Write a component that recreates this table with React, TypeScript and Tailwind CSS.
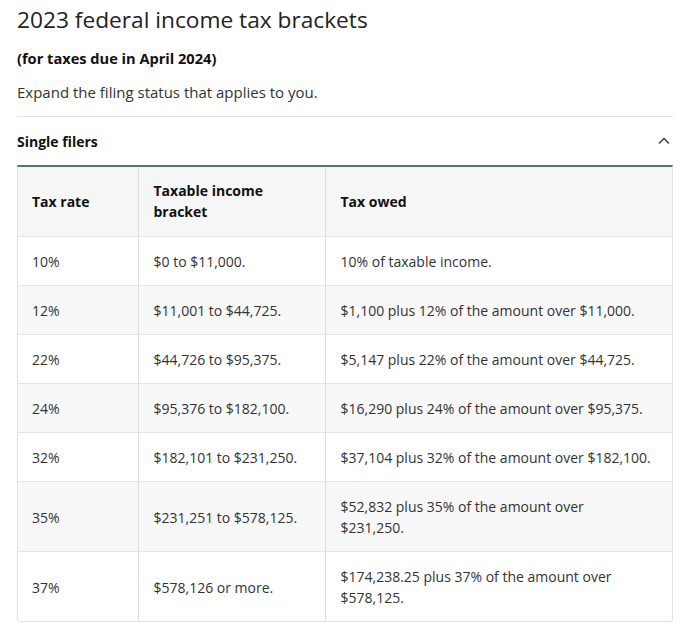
import type { ReactNode } from "react";

const rows: [string, string, ReactNode][] = [
  ["10%", "$0 to $11,000.", "10% of taxable income."],
  ["12%", "$11,001 to $44,725.", "$1,100 plus 12% of the amount over $11,000."],
  ["22%", "$44,726 to $95,375.", "$5,147 plus 22% of the amount over $44,725."],
  ["24%", "$95,376 to $182,100.", "$16,290 plus 24% of the amount over $95,375."],
  ["32%", "$182,101 to $231,250.", "$37,104 plus 32% of the amount over $182,100."],
  [
    "35%",
    "$231,251 to $578,125.",
    <>
      $52,832 plus 35% of the amount over
      <br />
      $231,250.
    </>,
  ],
  ["37%", "$578,126 or more.", "$174,238.25 plus 37% of the amount over $578,125."],
];

export default function App() {
  return (
    <div className="min-h-screen bg-white px-[17px] pt-[6px] text-[#333] font-['Open_Sans',sans-serif]">
      <div className="w-[656px]">
        {/* Heading */}
        <h1 className="text-[22.7px] leading-[28px] text-[#222]">
          2023 federal income tax brackets
        </h1>
        <p className="mt-[14px] text-[14.6px] leading-[20px] font-bold text-[#111]">
          (for taxes due in April 2024)
        </p>
        <p className="mt-[14px] text-[15px] leading-[20px] text-[#333]">
          Expand the filing status that applies to you.
        </p>

        {/* Accordion */}
        <div className="mt-[14px] border-t border-[#e3e3e3]">
          <button className="flex h-[48px] w-full items-center justify-between text-left">
            <span className="text-[14px] font-bold text-[#111]">
              Single filers
            </span>
            <svg width="14" height="14" viewBox="0 0 14 14" className="mr-[2px]">
              <polyline
                points="2,9.5 7,4.5 12,9.5"
                fill="none"
                stroke="#333"
                strokeWidth="1.3"
              />
            </svg>
          </button>

          <div className="overflow-hidden rounded-b-[4px] border-x border-b border-[#e2e2e2] border-t-2 border-t-[#4c7d5c]">
            <table className="w-full table-fixed border-collapse text-[14px] leading-[21px]">
              <colgroup>
                <col className="w-[120px]" />
                <col className="w-[187px]" />
                <col />
              </colgroup>
              <thead>
                <tr className="bg-[#f6f6f6] text-left text-[#111]">
                  <th className="px-[14px] pt-[13px] pb-[14px] font-bold">Tax rate</th>
                  <th className="border-l border-[#dedede] pl-[15px] pr-[14px] pt-[13px] pb-[14px] font-bold">
                    Taxable income bracket
                  </th>
                  <th className="border-l border-[#dedede] pl-[15px] pr-[14px] pt-[13px] pb-[14px] font-bold">
                    Tax owed
                  </th>
                </tr>
              </thead>
              <tbody>
                {rows.map((r, i) => (
                  <tr
                    key={r[0]}
                    className={`border-t border-[#e6e6e6] ${
                      i % 2 === 1 ? "bg-[#f8f8f8]" : "bg-white"
                    }`}
                  >
                    <td className="px-[14px] pt-[14px] pb-[13px]">{r[0]}</td>
                    <td className="border-l border-[#dedede] pl-[15px] pr-[14px] pt-[14px] pb-[13px]">
                      {r[1]}
                    </td>
                    <td className="border-l border-[#dedede] pl-[15px] pr-[14px] pt-[14px] pb-[13px]">
                      {r[2]}
                    </td>
                  </tr>
                ))}
              </tbody>
            </table>
          </div>
        </div>
      </div>
    </div>
  );
}
